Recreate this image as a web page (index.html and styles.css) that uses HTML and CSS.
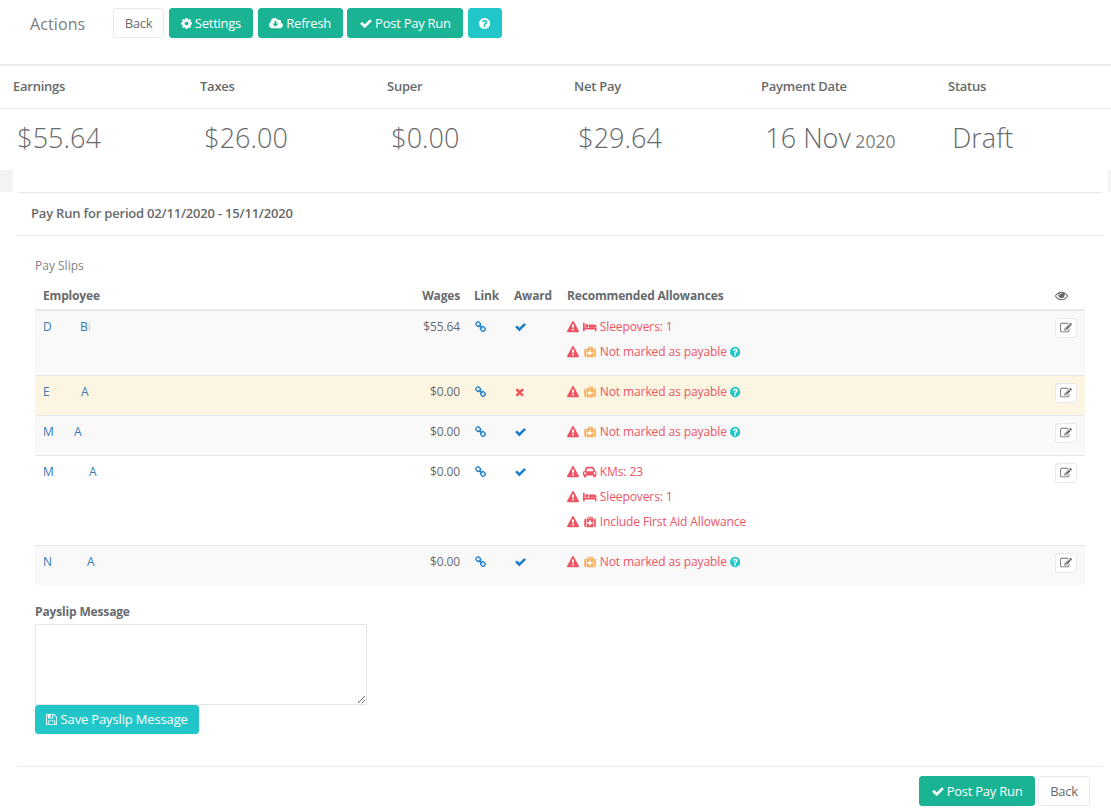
FILE: index.html
```html
<!DOCTYPE html>
<html lang="en">
<head>
<meta charset="utf-8">
<title>Pay Run</title>
<link rel="stylesheet" href="styles.css">
</head>
<body>
<svg class="sprite" xmlns="http://www.w3.org/2000/svg">
<symbol id="i-check" viewBox="64 0 1664 1792"><path d="M1671 566q0 40-28 68l-724 724-136 136q-28 28-68 28t-68-28l-136-136-362-362q-28-28-28-68t28-68l136-136q28-28 68-28t68 28l294 295 656-657q28-28 68-28t68 28l136 136q28 28 28 68z"/></symbol>
<symbol id="i-times" viewBox="192 0 1408 1792"><path d="M1490 1322q0 40-28 68l-136 136q-28 28-68 28t-68-28l-294-294-294 294q-28 28-68 28t-68-28l-136-136q-28-28-28-68t28-68l294-294-294-294q-28-28-28-68t28-68l136-136q28-28 68-28t68 28l294 294 294-294q28-28 68-28t68 28l136 136q28 28 28 68t-28 68l-294 294 294 294q28 28 28 68z"/></symbol>
<symbol id="i-help" viewBox="128 0 1536 1792"><path d="M1024 1376v-192q0-14-9-23t-23-9h-192q-14 0-23 9t-9 23v192q0 14 9 23t23 9h192q14 0 23-9t9-23zm256-672q0-88-55.500-163t-138.500-116-170-41q-243 0-371 213-15 24 8 42l132 100q7 6 19 6 16 0 25-12 53-68 86-92 34-24 86-24 48 0 85.500 26t37.500 59q0 38-20 61t-68 45q-63 28-115.500 86.500t-52.500 125.500v36q0 14 9 23t23 9h192q14 0 23-9t9-23q0-19 21.500-49.500t54.500-49.500q32-18 49-28.500t46-35 44.500-48 28-60.500 12.500-81zm384 192q0 209-103 385.500t-279.500 279.500-385.500 103-385.500-103-279.500-279.500-103-385.500 103-385.500 279.500-279.500 385.500-103 385.500 103 279.500 279.500 103 385.500z"/></symbol>
<symbol id="i-warn" viewBox="0 0 1792 1792"><path d="M1024 1375v-190q0-14-9.500-23.500t-22.500-9.500h-192q-13 0-22.500 9.500t-9.500 23.500v190q0 14 9.500 23.500t22.500 9.500h192q13 0 22.500-9.500t9.500-23.500zm-2-374l18-459q0-12-10-19-13-11-24-11h-220q-11 0-24 11-10 7-10 21l17 457q0 10 10 16.500t24 6.500h185q14 0 23.500-6.500t10.500-16.500zm-14-934l768 1408q35 63-2 126-17 29-46.500 46t-63.500 17h-1536q-34 0-63.500-17t-46.500-46q-37-63-2-126l768-1408q17-31 47-49t65-18 65 18 47 49z"/></symbol>
<symbol id="i-cog" viewBox="128 0 1536 1792"><path d="M1152 896q0-106-75-181t-181-75-181 75-75 181 75 181 181 75 181-75 75-181zm512-109v222q0 12-8 23t-20 13l-185 28q-19 54-39 91 35 50 107 138 10 12 10 25t-9 23q-27 37-99 108t-94 71q-12 0-26-9l-138-108q-44 23-91 38-16 136-29 186-7 28-36 28h-222q-14 0-24.500-8.500t-11.500-21.500l-28-184q-49-16-90-37l-141 107q-10 9-25 9-14 0-25-11-126-114-165-168-7-10-7-23 0-12 8-23 15-21 51-66.500t54-70.500q-27-50-41-99l-183-27q-13-2-21-12.500t-8-23.500v-222q0-12 8-23t19-13l186-28q14-46 39-92-40-57-107-138-10-12-10-24 0-10 9-23 26-36 98.500-107.500t94.500-71.500q13 0 26 10l138 107q44-23 91-38 16-136 29-186 7-28 36-28h222q14 0 24.500 8.500t11.500 21.500l28 184q49 16 90 37l142-107q9-9 24-9 13 0 25 10 129 119 165 170 7 8 7 22 0 12-8 23-15 21-51 66.500t-54 70.500q26 50 41 98l183 28q13 2 21 12.500t8 23.500z"/></symbol>
<symbol id="i-cloud" viewBox="0 0 1920 1792"><path d="M1280 928q0-14-9-23t-23-9h-224v-352q0-13-9.500-22.500t-22.500-9.500h-192q-13 0-22.500 9.500t-9.500 22.500v352h-224q-13 0-22.500 9.500t-9.500 22.500q0 14 9 23l352 352q9 9 23 9t23-9l351-351q10-12 10-24zm640 224q0 159-112.500 271.500t-271.500 112.500h-1088q-185 0-316.500-131.500t-131.500-316.500q0-130 70-240t188-165q-2-30-2-43 0-212 150-362t362-150q156 0 285.500 87t188.500 231q71-62 166-62 106 0 181 75t75 181q0 76-41 138 130 31 213.500 135.500t83.500 238.500z"/></symbol>
<symbol id="i-link" viewBox="64 0 1664 1792"><path d="M1520 1216q0-40-28-68l-208-208q-28-28-68-28-42 0-72 32 3 3 19 18.500t21.500 21.500 15 19 13 25.500 3.500 27.500q0 40-28 68t-68 28q-15 0-27.500-3.500t-25.500-13-19-15-21.500-21.500-18.500-19q-33 31-33 73 0 40 28 68l206 207q27 27 68 27 40 0 68-26l147-146q28-28 28-67zm-703-705q0-40-28-68l-206-207q-28-28-68-28-39 0-68 27l-147 146q-28 28-28 67 0 40 28 68l208 208q27 27 68 27 42 0 72-31-3-3-19-18.500t-21.500-21.500-15-19-13-25.500-3.500-27.500q0-40 28-68t68-28q15 0 27.500 3.500t25.500 13 19 15 21.500 21.500 18.500 19q33-31 33-73zm895 705q0 120-85 203l-147 146q-83 83-203 83-121 0-204-85l-206-207q-83-83-83-203 0-123 88-209l-88-88q-86 88-208 88-120 0-204-84l-208-208q-84-84-84-204t85-203l147-146q83-83 203-83 121 0 204 85l206 207q83 83 83 203 0 123-88 209l88 88q86-88 208-88 120 0 204 84l208 208q84 84 84 204z"/></symbol>
<symbol id="i-bed" viewBox="0 0 2048 1792"><path d="M256 1024h1728q26 0 45 19t19 45v448h-256v-256h-1536v256h-256v-1216q0-26 19-45t45-19h128q26 0 45 19t19 45v704zm576-320q0-106-75-181t-181-75-181 75-75 181 75 181 181 75 181-75 75-181zm1216 256v-64q0-159-112.500-271.500t-271.500-112.500h-704q-26 0-45 19t-19 45v384h1152z"/></symbol>
<symbol id="i-medkit" viewBox="-128 0 2048 1792"><path d="M1280 1120v-192q0-14-9-23t-23-9h-224v-224q0-14-9-23t-23-9h-192q-14 0-23 9t-9 23v224h-224q-14 0-23 9t-9 23v192q0 14 9 23t23 9h224v224q0 14 9 23t23 9h192q14 0 23-9t9-23v-224h224q14 0 23-9t9-23zm-640-736h512v-128h-512v128zm-320 0v1280h-32q-92 0-158-66t-66-158v-832q0-92 66-158t158-66h32zm1120 0v1280h-1024v-1280h160v-160q0-40 28-68t68-28h576q40 0 68 28t28 68v160h160zm352 224v832q0 92-66 158t-158 66h-32v-1280h32q92 0 158 66t66 158z"/></symbol>
<symbol id="i-car" viewBox="0 0 2048 1792"><path d="M480 1088q0-66-47-113t-113-47-113 47-47 113 47 113 113 47 113-47 47-113zm36-320h1016l-89-357q-2-8-14-17.500t-21-9.500h-768q-9 0-21 9.500t-14 17.500zm1372 320q0-66-47-113t-113-47-113 47-47 113 47 113 113 47 113-47 47-113zm160-96v384q0 14-9 23t-23 9h-96v128q0 80-56 136t-136 56-136-56-56-136v-128h-1024v128q0 80-56 136t-136 56-136-56-56-136v-128h-96q-14 0-23-9t-9-23v-384q0-93 65.500-158.500t158.500-65.500h28l105-419q23-94 104-157.500t179-63.500h768q98 0 179 63.500t104 157.500l105 419h28q93 0 158.500 65.500t65.500 158.500z"/></symbol>
<symbol id="i-eye" viewBox="0 0 1792 1792"><path d="M1664 960q-152-236-381-353 61 104 61 225 0 185-131.500 316.500t-316.500 131.500-316.500-131.500-131.500-316.500q0-121 61-225-229 117-381 353 133 205 333.500 326.500t434.500 121.500 434.500-121.500 333.500-326.500zm-720-384q0-20-14-34t-34-14q-125 0-214.500 89.500t-89.500 214.500q0 20 14 34t34 14 34-14 14-34q0-86 61-147t147-61q20 0 34-14t14-34zm848 384q0 34-20 69-140 230-376.500 368.500t-499.500 138.500-499.500-139-376.500-368q-20-35-20-69t20-69q140-229 376.500-368t499.500-139 499.500 139 376.500 368q20 35 20 69z"/></symbol>
<symbol id="i-edit" viewBox="0 0 1792 1792"><path d="M888 1184l116-116-152-152-116 116v56h96v96h56zm440-720q-16-16-33 1l-350 350q-17 17-1 33t33-1l350-350q17-17 1-33zm80 594v190q0 119-84.500 203.500t-203.500 84.500h-832q-119 0-203.500-84.500t-84.500-203.500v-832q0-119 84.500-203.500t203.500-84.500h832q63 0 117 25 15 7 18 23 3 17-9 29l-49 49q-14 14-32 8-23-6-45-6h-832q-66 0-113 47t-47 113v832q0 66 47 113t113 47h832q66 0 113-47t47-113v-126q0-13 9-22l64-64q15-15 35-7t20 29zm-96-738l288 288-672 672h-288v-288zm444 132l-92 92-288-288 92-92q28-28 68-28t68 28l152 152q28 28 28 68t-28 68z"/></symbol>
<symbol id="i-save" viewBox="128 0 1536 1792"><path d="M512 1536h768v-384h-768v384zm896 0h128v-896q0-14-10-38.500t-20-34.500l-281-281q-10-10-34-20t-39-10v416q0 40-28 68t-68 28h-576q-40 0-68-28t-28-68v-416h-128v1280h128v-416q0-40 28-68t68-28h832q40 0 68 28t28 68v416zm-384-928v-320q0-13-9.500-22.500t-22.500-9.500h-192q-13 0-22.500 9.500t-9.500 22.500v320q0 13 9.500 22.500t22.500 9.500h192q13 0 22.500-9.500t9.500-22.500zm640 32v928q0 40-28 68t-68 28h-1344q-40 0-68-28t-28-68v-1344q0-40 28-68t68-28h928q40 0 88 20t76 48l280 280q28 28 48 76t20 88z"/></symbol>
</svg>

<header class="actions">
  <span class="actions-title">Actions</span>
  <div class="actions-buttons">
    <a class="btn btn-white btn-back">Back</a>
    <a class="btn btn-primary btn-settings"><svg class="ic w86"><use href="#i-cog"/></svg> Settings</a>
    <a class="btn btn-primary btn-refresh"><svg class="ic w107"><use href="#i-cloud"/></svg> Refresh</a>
    <a class="btn btn-primary btn-post"><svg class="ic w93"><use href="#i-check"/></svg> Post Pay Run</a>
    <a class="btn btn-info btn-help"><svg class="ic w86"><use href="#i-help"/></svg></a>
  </div>
</header>

<section class="stats">
  <div class="stat-labels">
    <div>Earnings</div><div>Taxes</div><div>Super</div><div>Net Pay</div><div>Payment Date</div><div>Status</div>
  </div>
  <div class="stat-values">
    <div>$55.64</div><div>$26.00</div><div>$0.00</div><div>$29.64</div><div>16 Nov <small>2020</small></div><div>Draft</div>
  </div>
</section>

<div class="gutter"><span class="gutter-l"></span><span class="gutter-r"></span></div>

<main class="panel">
  <h5 class="panel-title">Pay Run for period 02/11/2020 - 15/11/2020</h5>
  <div class="panel-body">
    <div class="slips-label">Pay Slips</div>
    <table class="slips">
      <thead>
        <tr>
          <th class="c-emp">Employee</th>
          <th class="c-wages">Wages</th>
          <th class="c-link">Link</th>
          <th class="c-award">Award</th>
          <th class="c-rec">Recommended Allowances</th>
          <th class="c-view"><svg class="ic ic-eye"><use href="#i-eye"/></svg></th>
        </tr>
      </thead>
      <tbody>
        <tr class="odd">
          <td class="c-emp"><a class="name"><span class="first g37">D</span>B<span class="faint">i</span></a></td>
          <td class="c-wages">$55.64</td>
          <td class="c-link"><svg class="ic w93 blue"><use href="#i-link"/></svg></td>
          <td class="c-award"><svg class="ic w93 blue"><use href="#i-check"/></svg></td>
          <td class="c-rec">
            <div class="allow"><svg class="ic red warn"><use href="#i-warn"/></svg> <svg class="ic w114 red"><use href="#i-bed"/></svg> Sleepovers: 1</div>
            <div class="allow"><svg class="ic red warn"><use href="#i-warn"/></svg> <svg class="ic w114 orange"><use href="#i-medkit"/></svg> Not marked as payable <svg class="ic w86 cyan"><use href="#i-help"/></svg></div>
          </td>
          <td class="c-view"><a class="btn-edit"><svg class="ic"><use href="#i-edit"/></svg></a></td>
        </tr>
        <tr class="warning">
          <td class="c-emp"><a class="name"><span class="first g38">E</span>A</a></td>
          <td class="c-wages">$0.00</td>
          <td class="c-link"><svg class="ic w93 blue"><use href="#i-link"/></svg></td>
          <td class="c-award"><svg class="ic w79 red"><use href="#i-times"/></svg></td>
          <td class="c-rec">
            <div class="allow"><svg class="ic red warn"><use href="#i-warn"/></svg> <svg class="ic w114 orange"><use href="#i-medkit"/></svg> Not marked as payable <svg class="ic w86 cyan"><use href="#i-help"/></svg></div>
          </td>
          <td class="c-view"><a class="btn-edit"><svg class="ic"><use href="#i-edit"/></svg></a></td>
        </tr>
        <tr class="odd">
          <td class="c-emp"><a class="name"><span class="first g31">M</span>A</a></td>
          <td class="c-wages">$0.00</td>
          <td class="c-link"><svg class="ic w93 blue"><use href="#i-link"/></svg></td>
          <td class="c-award"><svg class="ic w93 blue"><use href="#i-check"/></svg></td>
          <td class="c-rec">
            <div class="allow"><svg class="ic red warn"><use href="#i-warn"/></svg> <svg class="ic w114 orange"><use href="#i-medkit"/></svg> Not marked as payable <svg class="ic w86 cyan"><use href="#i-help"/></svg></div>
          </td>
          <td class="c-view"><a class="btn-edit"><svg class="ic"><use href="#i-edit"/></svg></a></td>
        </tr>
        <tr>
          <td class="c-emp"><a class="name"><span class="first g46">M</span>A</a></td>
          <td class="c-wages">$0.00</td>
          <td class="c-link"><svg class="ic w93 blue"><use href="#i-link"/></svg></td>
          <td class="c-award"><svg class="ic w93 blue"><use href="#i-check"/></svg></td>
          <td class="c-rec">
            <div class="allow"><svg class="ic red warn"><use href="#i-warn"/></svg> <svg class="ic w114 red"><use href="#i-car"/></svg> KMs: 23</div>
            <div class="allow"><svg class="ic red warn"><use href="#i-warn"/></svg> <svg class="ic w114 red"><use href="#i-bed"/></svg> Sleepovers: 1</div>
            <div class="allow"><svg class="ic red warn"><use href="#i-warn"/></svg> <svg class="ic w114 red"><use href="#i-medkit"/></svg> Include First Aid Allowance</div>
          </td>
          <td class="c-view"><a class="btn-edit"><svg class="ic"><use href="#i-edit"/></svg></a></td>
        </tr>
        <tr class="odd">
          <td class="c-emp"><a class="name"><span class="first g44">N</span>A</a></td>
          <td class="c-wages">$0.00</td>
          <td class="c-link"><svg class="ic w93 blue"><use href="#i-link"/></svg></td>
          <td class="c-award"><svg class="ic w93 blue"><use href="#i-check"/></svg></td>
          <td class="c-rec">
            <div class="allow"><svg class="ic red warn"><use href="#i-warn"/></svg> <svg class="ic w114 orange"><use href="#i-medkit"/></svg> Not marked as payable <svg class="ic w86 cyan"><use href="#i-help"/></svg></div>
          </td>
          <td class="c-view"><a class="btn-edit"><svg class="ic"><use href="#i-edit"/></svg></a></td>
        </tr>
      </tbody>
    </table>

    <form class="message">
      <label class="message-label" for="msg">Payslip Message</label>
      <textarea class="message-input" id="msg"></textarea>
      <a class="btn btn-info btn-save"><svg class="ic w86"><use href="#i-save"/></svg> Save Payslip Message</a>
    </form>
  </div>
  <footer class="panel-footer">
    <a class="btn btn-primary btn-post"><svg class="ic w93"><use href="#i-check"/></svg> Post Pay Run</a>
    <a class="btn btn-white btn-back-end">Back</a>
  </footer>
</main>
</body>
</html>
```
FILE: styles.css
```css
* { box-sizing: border-box; }
html, body { margin: 0; padding: 0; background: #fff; }
body {
  width: 1111px;
  height: 812px;
  overflow: hidden;
  font-family: "Open Sans", "Liberation Sans", sans-serif;
  font-size: 13px;
  color: #676a6c;
}
.sprite { display: none; }
.ic {
  display: inline-block;
  width: 1em;
  height: 1em;
  fill: currentColor;
  vertical-align: -0.14em;
}
.w79 { width: 0.786em; }
.w86 { width: 0.857em; }
.w93 { width: 0.929em; }
.w107 { width: 1.071em; }
.w114 { width: 1.143em; }

.actions {
  display: flex;
  align-items: flex-start;
  height: 64px;
  padding: 8px 0 0 30px;
}
.actions-title {
  width: 83px;
  font-size: 16px;
  letter-spacing: 0.1px;
  line-height: 32px;
  color: #7b7e81;
}
.actions-buttons { display: flex; gap: 4.7px; }

.btn {
  display: inline-block;
  height: 30px;
  padding: 0;
  border: 1px solid transparent;
  border-radius: 3px;
  font-size: 13px;
  letter-spacing: -0.25px;
  line-height: 28px;
  white-space: nowrap;
  text-align: center;
}
.btn-white { background: #fff; border-color: #e7eaec; color: #676a6c; }
.btn-primary { background: #1ab394; border-color: #1ab394; color: #fff; }
.btn-info { background: #23c6c8; border-color: #23c6c8; color: #fff; }
.btn-back { width: 51px; }
.btn-back-end { width: 52px; }
.btn-settings { width: 84.3px; }
.btn-refresh { width: 85px; }
.btn-post { width: 116px; }
.btn-help { width: 34px; }

.stats { border-top: 2px solid #e7eaec; }
.stat-labels, .stat-values {
  display: grid;
  grid-template-columns: repeat(6, 187px);
}
.stat-labels {
  height: 43px;
  padding-left: 13px;
  border-bottom: 1px solid #e7eaec;
  font-weight: 600;
  font-size: 13px;
  letter-spacing: -0.25px;
  line-height: 40px;
}
.stat-values {
  height: 61px;
  padding-left: 17.3px;
  font-size: 27px;
  font-weight: 300;
  line-height: 58px;
}
.stat-values small { font-size: 65%; margin-left: -2.5px; font-weight: 400; color: #7f8285; }

.gutter {
  display: flex;
  justify-content: space-between;
  height: 22px;
}
.gutter-l { width: 13px; background: #f3f3f4; }
.gutter-r { width: 3px; background: #f3f3f4; }

.panel { margin: 0 8px 0 17px; }
.panel-title {
  margin: 0;
  height: 44px;
  padding-left: 14px;
  border-top: 1px solid #e7eaec;
  border-bottom: 1px solid #e7eaec;
  font-size: 13px;
  font-weight: 600;
  letter-spacing: -0.2px;
  line-height: 41px;
}
.panel-body { padding: 21px 18px 0; }
.slips-label { font-size: 12px; color: #7f8285; line-height: 17px; margin-bottom: 8px; }

.slips {
  width: 1050px;
  border-collapse: collapse;
  table-layout: fixed;
  font-size: 12px;
  letter-spacing: -0.1px;
}
.slips th {
  height: 28px;
  padding: 0 7px;
  font-weight: 700;
  letter-spacing: -0.17px;
  text-align: left;
  border-bottom: 2px solid #e7eaec;
}
.slips td {
  padding: 3px 7px 11px;
  vertical-align: top;
  line-height: 25px;
  border-bottom: 1px solid #e7eaec;
}
.slips .c-emp { width: 379px; padding-left: 8px; }
.slips tbody tr:last-child td { border-bottom: 0; }
.odd td { background: #f9f9f9; }
.warning td { background: #fcf5e2; }
.slips .c-wages { width: 53px; text-align: right; }
.c-link { width: 40px; }
.c-award { width: 53px; }
.c-rec { width: 488px; }
.c-view { width: 37px; }
td.c-link .ic, td.c-award .ic { margin-left: 1px; }
.blue { color: #1c7ec9; }
.red { color: #ed5565; }
.orange { color: #f8ac59; }
.cyan { color: #23c6c8; }
.allow { color: #ed5565; white-space: nowrap; }
.warn { margin-right: 1px; }
.name { color: #337ab7; }
.first { display: inline-block; }
.g31 { width: 31px; }
.g37 { width: 37px; }
.g38 { width: 38px; }
.g44 { width: 44px; }
.g46 { width: 46px; }
.faint { opacity: 0.35; }
.ic-eye { font-size: 13px; color: #676a6c; }
.btn-edit {
  display: flex;
  align-items: center;
  justify-content: center;
  width: 22px;
  height: 20px;
  margin-top: 4px;
  background: #fff;
  border: 1px solid #e7eaec;
  border-radius: 3px;
  font-size: 12px;
}

.message { margin-top: 18px; }
.message-label {
  display: block;
  font-size: 12px;
  font-weight: 700;
  letter-spacing: -0.15px;
  line-height: 17px;
  margin-bottom: 4px;
}
.message-input {
  display: block;
  width: 332px;
  height: 81px;
  border: 1px solid #e5e6e7;
  background: #fff;
  margin: 0;
}
.btn-save { display: block; width: 164px; height: 29px; letter-spacing: -0.15px; line-height: 27px; }

.panel-footer {
  display: flex;
  justify-content: flex-end;
  gap: 3px;
  margin-top: 32px;
  padding: 9px 13px 0 0;
  border-top: 1px solid #e7eaec;
}
```
